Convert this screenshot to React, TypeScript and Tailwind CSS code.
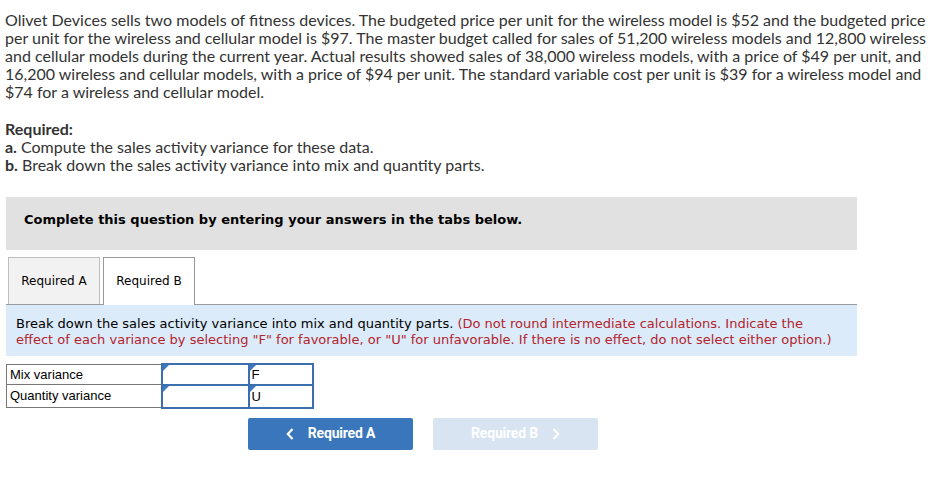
import * as React from "react";

const lines = [
  "Olivet Devices sells two models of fitness devices. The budgeted price per unit for the wireless model is $52 and the budgeted price",
  "per unit for the wireless and cellular model is $97. The master budget called for sales of 51,200 wireless models and 12,800 wireless",
  "and cellular models during the current year. Actual results showed sales of 38,000 wireless models, with a price of $49 per unit, and",
  "16,200 wireless and cellular models, with a price of $94 per unit. The standard variable cost per unit is $39 for a wireless model and",
  "$74 for a wireless and cellular model.",
];

const Corner = () => (
  <span className="absolute left-0 top-0 w-0 h-0 border-t-[6px] border-t-[#3c78c3] border-r-[6px] border-r-transparent" />
);

const rows = [
  { label: "Mix variance", effect: "F" },
  { label: "Quantity variance", effect: "U" },
];

export default function App() {
  return (
    <div className="w-[945px] h-[481px] bg-white text-[#333] overflow-hidden">
      <div className="pl-[5px] pt-[11px] font-['Lato',sans-serif] text-[16px] leading-[18px] whitespace-nowrap">
        {lines.map((l) => (
          <div key={l}>{l}</div>
        ))}
        <div className="mt-[19px] font-bold">Required:</div>
        <div>
          <b>a.</b> Compute the sales activity variance for these data.
        </div>
        <div>
          <b>b.</b> Break down the sales activity variance into mix and quantity parts.
        </div>
      </div>

      <div className="ml-[6px] mt-[23px] w-[851px] h-[53px] bg-[#e1e1e1] pl-[18px] pt-[13px] font-['DejaVu_Sans',sans-serif] text-[13px] font-bold text-black">
        Complete this question by entering your answers in the tabs below.
      </div>

      <div className="ml-[6px] mt-[7px] w-[851px] flex items-end border-b border-[#9a9a9a] font-['DejaVu_Sans',sans-serif] text-[12px] text-black">
        <div className="ml-[2px] w-[92px] h-[47px] bg-[#f2f2f2] border border-b-0 border-[#bdbdbd] flex items-center justify-center">
          Required A
        </div>
        <div className="ml-[3px] w-[92px] h-[48px] bg-white border border-b-0 border-[#9a9a9a] flex items-center justify-center -mb-px pb-px">
          Required B
        </div>
      </div>

      <div className="ml-[6px] w-[851px] h-[51px] bg-[#dbebf9] pl-[10px] pt-[11px] font-['DejaVu_Sans',sans-serif] text-[13px] leading-[16px] whitespace-nowrap">
        <div>
          <span className="text-black">Break down the sales activity variance into mix and quantity parts. </span>
          <span className="text-[#b3232d]">(Do not round intermediate calculations. Indicate the</span>
        </div>
        <div className="text-[#b3232d]">
          effect of each variance by selecting "F" for favorable, or "U" for unfavorable. If there is no effect, do not select either option.)
        </div>
      </div>

      <table className="ml-[6px] mt-[7px] border-collapse font-['Liberation_Sans',sans-serif] text-[13px] text-black">
        <tbody>
          {rows.map((r, i) => (
            <tr key={r.label} className={i === 0 ? "h-[20px]" : "h-[23px]"}>
              <td className="w-[155px] border border-[#777] pl-[3px] p-0">{r.label}</td>
              <td className="w-[87px] border-2 border-[#3c6fae] relative p-0">
                <Corner />
              </td>
              <td className="w-[64px] border-2 border-[#3c6fae] relative p-0 pl-[2px] align-middle leading-none">
                <Corner />
                {r.effect}
              </td>
            </tr>
          ))}
        </tbody>
      </table>

      <div className="flex mt-[9px] ml-[248px] gap-[20px] font-['Roboto',sans-serif] text-[14px] font-bold tracking-[-0.2px]">
        <button className="w-[165px] h-[32px] rounded-[2px] bg-[#3a76bb] text-white flex items-center justify-center gap-[14px]">
          <svg width="8" height="12" viewBox="0 0 8 12" fill="none" stroke="white" strokeWidth="2.2">
            <path d="M6.5 1 L1.8 6 L6.5 11" />
          </svg>
          Required A
        </button>
        <button className="w-[165px] h-[32px] rounded-[2px] bg-[#d8e4f2] text-white flex items-center justify-center gap-[14px]">
          Required B
          <svg width="8" height="12" viewBox="0 0 8 12" fill="none" stroke="white" strokeWidth="2.2">
            <path d="M1.5 1 L6.2 6 L1.5 11" />
          </svg>
        </button>
      </div>
    </div>
  );
}
